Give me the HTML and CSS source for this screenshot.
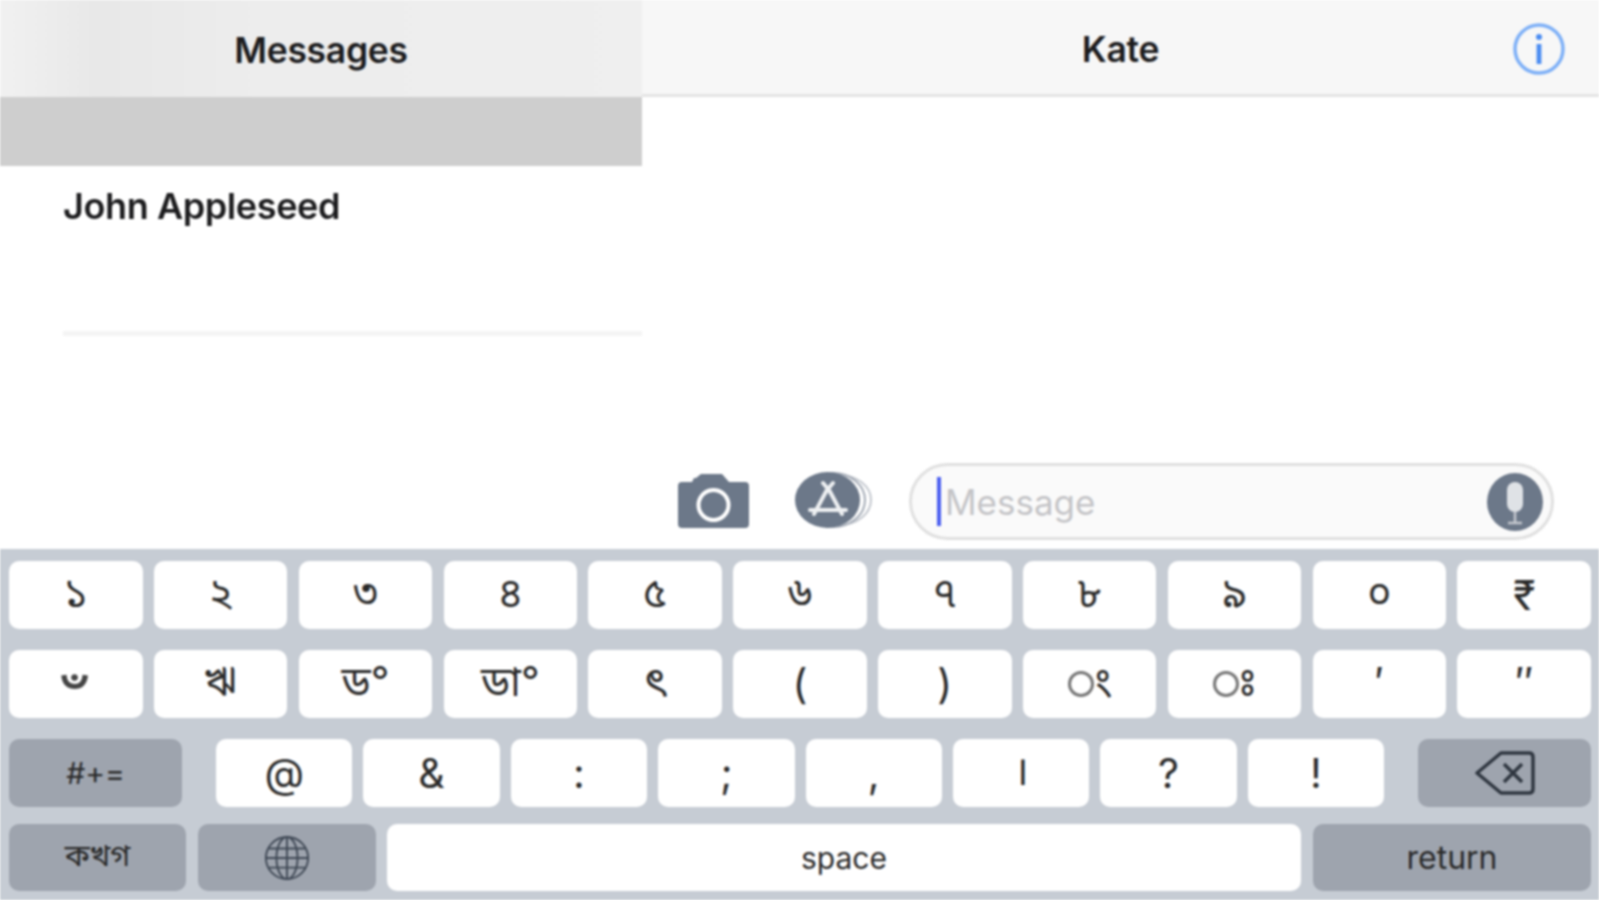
FILE: index.html
```html
<!DOCTYPE html>
<html lang="en">
<head>
  <meta charset="UTF-8">
  <title>Messages</title>
  <link rel="stylesheet" href="styles.css">
</head>
<body>
  <div class="screen">
    <div class="panes">
      <div class="sidebar">
        <div class="nav-bar nav-bar-left"><span class="nav-title">Messages</span></div>
        <div class="selected-row"></div>
        <div class="contact">
          <div class="contact-name">John Appleseed</div>
        </div>
      </div>
      <div class="conversation">
        <div class="nav-bar nav-bar-right">
          <span class="nav-title">Kate</span>
          <svg class="info-icon" viewBox="0 0 52 52">
            <circle cx="26" cy="26" r="24" fill="none" stroke="#7eb0f7" stroke-width="3.500"/>
            <circle cx="26" cy="14" r="3" fill="#4a8cf2"/>
            <rect x="23.600" y="21" width="4.800" height="20" fill="#4a8cf2"/>
          </svg>
        </div>
        <div class="thread"></div>
        <div class="composer">
          <svg class="camera-icon" viewBox="0 0 71 54">
            <path fill="#6c7889" fill-rule="evenodd" d="M4 8h10l2-4h2l5-4h21l7 8h16q4 0 4 4v38q0 4-4 4H4q-4 0-4-4V12q0-4 4-4zM35.500 14a17 17 0 1 0 .01 0zM35.500 18a13 13 0 1 1-.01 0z"/>
          </svg>
          <svg class="apps-icon" viewBox="0 0 78 58">
            <ellipse cx="44" cy="29" rx="32" ry="25" fill="none" stroke="#c4c8cf" stroke-width="2"/>
            <ellipse cx="38" cy="29" rx="32" ry="27" fill="#fff" stroke="#a4abb6" stroke-width="2"/>
            <ellipse cx="32.500" cy="29" rx="32.500" ry="28" fill="#6c7889"/>
            <path d="M33 17L19 43M33 17l14 26M15 39h36M28 12l5 6 5-6" fill="none" stroke="#eef0f2" stroke-width="4" stroke-linecap="round"/>
          </svg>
          <div class="message-field">
            <span class="caret"></span>
            <span class="placeholder">Message</span>
            <svg class="mic-icon" viewBox="0 0 56 58">
              <ellipse cx="28" cy="29" rx="28" ry="29" fill="#6c7889"/>
              <rect x="20" y="9" width="16" height="30" rx="8" fill="#dfe2e6"/>
              <path d="M28 39v11M21 50h14" stroke="#c4c8ce" stroke-width="2.500" fill="none"/>
            </svg>
          </div>
        </div>
      </div>
    </div>
    <div class="keyboard">
      <div class="key-row key-grid">
        <div class="key">১</div><div class="key">২</div><div class="key">৩</div><div class="key">৪</div><div class="key">৫</div><div class="key">৬</div><div class="key">৭</div><div class="key">৮</div><div class="key">৯</div><div class="key">০</div><div class="key">₹</div>
      </div>
      <div class="key-row key-grid">
        <div class="key"><span class="key-mark">&nbsp;ঁ</span></div><div class="key">ঋ</div><div class="key">ড°</div><div class="key">ডা°</div><div class="key">ৎ</div><div class="key">(</div><div class="key">)</div>
        <div class="key"><span class="ring"></span><span>◌ং</span></div><div class="key"><span class="ring"></span><span>◌ঃ</span></div>
        <div class="key key-raised">′</div><div class="key key-raised">″</div>
      </div>
      <div class="key-row key-split">
        <div class="key key-dark key-shift">#+=</div>
        <div class="key-middle">
          <div class="key">@</div><div class="key">&amp;</div><div class="key">:</div><div class="key">;</div><div class="key">,</div><div class="key">।</div><div class="key">?</div><div class="key">!</div>
        </div>
        <div class="key key-dark key-shift">
          <svg class="delete-icon" viewBox="0 0 60 44">
            <path d="M26 2h28q4 0 4 4v32q0 4-4 4H26L2 22z" fill="none" stroke="#2f3640" stroke-width="3.500" stroke-linejoin="round"/>
            <path d="M29 13l18 18M47 13L29 31" fill="none" stroke="#2f3640" stroke-width="3.500"/>
          </svg>
        </div>
      </div>
      <div class="key-row key-bottom">
        <div class="key key-dark key-lang">কখগ</div>
        <div class="key key-dark key-globe">
          <svg class="globe-icon" viewBox="0 0 48 48">
            <g fill="none" stroke="#3f4855" stroke-width="2">
              <circle cx="24" cy="24" r="22"/>
              <ellipse cx="24" cy="24" rx="11" ry="22"/>
              <path d="M24 2v44M2 24h44M5 14h38M5 34h38"/>
            </g>
          </svg>
        </div>
        <div class="key key-space">space</div>
        <div class="key key-dark key-return">return</div>
      </div>
    </div>
  </div>
</body>
</html>
```

FILE: styles.css
```css
* {
  margin: 0;
  padding: 0;
  box-sizing: border-box;
}
html, body {
  width: 100%;
  height: 100%;
  overflow: hidden;
  background: #fff;
  font-family: Inter, "Noto Sans", "Liberation Sans", sans-serif;
  color: #1c1c1e;
}
.screen {
  display: flex;
  flex-direction: column;
  width: 100%;
  height: 100%;
  filter: blur(1.1px);
}
.panes {
  display: flex;
  height: 549px;
}
.sidebar {
  width: 642px;
  display: flex;
  flex-direction: column;
}
.conversation {
  flex: 1;
  display: flex;
  flex-direction: column;
}
.nav-bar {
  height: 97px;
  padding-top: 4px;
  display: flex;
  align-items: center;
  justify-content: center;
  position: relative;
  flex-shrink: 0;
}
.nav-bar-left {
  background: linear-gradient(90deg, #f1f1f1, #e8e8e8 15%, #ededed 40%, #efefef);
}
.nav-bar-right {
  background: #f7f7f7;
  border-bottom: 3px solid #e4e4e4;
}
.nav-title {
  font-size: 35.500px;
  font-weight: 600;
  letter-spacing: -0.3px;
}
.info-icon {
  position: absolute;
  right: 34px;
  top: 23px;
  width: 52px;
  height: 52px;
}
.selected-row {
  height: 69px;
  background: #cecece;
}
.contact {
  margin-left: 63px;
  height: 170px;
  border-bottom: 5px solid #f4f4f4;
  padding-top: 18px;
}
.contact-name {
  font-size: 36px;
  font-weight: 600;
  letter-spacing: -0.4px;
}
.thread {
  flex: 1;
}
.composer {
  height: 89px;
  display: flex;
  align-items: flex-start;
  padding: 3px 45px 0 36px;
}
.camera-icon {
  width: 71px;
  height: 54px;
  margin-top: 11px;
}
.apps-icon {
  width: 78px;
  height: 58px;
  margin: 8px 0 0 46px;
}
.message-field {
  margin-left: 36px;
  flex: 1;
  height: 77px;
  border: 3px solid #e0e0e0;
  border-radius: 39px;
  background: #fafafa;
  display: flex;
  align-items: center;
  padding: 0 8px 0 25px;
}
.caret {
  width: 4px;
  height: 49px;
  background: #4a5ef0;
  margin-right: 4px;
}
.placeholder {
  flex: 1;
  font-size: 35px;
  color: #c4c4c7;
}
.mic-icon {
  width: 56px;
  height: 58px;
}
.keyboard {
  flex: 1;
  background: #c6ccd4;
  padding: 12px 8px 0 9px;
}
.key-row {
  height: 68px;
  margin-bottom: 21px;
}
.key-grid {
  display: grid;
  grid-template-columns: repeat(11, 1fr);
  column-gap: 11.350px;
}
.key-split {
  display: flex;
  justify-content: space-between;
  margin-bottom: 17px;
}
.key-middle {
  width: 1168px;
  display: flex;
  gap: 11px;
}
.key-middle .key {
  flex: 1;
}
.key-bottom {
  display: flex;
  height: 67px;
  margin-bottom: 0;
}
.key {
  background: #fff;
  border-radius: 10px;
  display: flex;
  align-items: center;
  justify-content: center;
  font-size: 41px;
  color: #2a2a2a;
  font-family: Inter, "Noto Sans Bengali", "Noto Sans", sans-serif;
}
.key-dark {
  background: #9ea4ae;
}
.key-mark {
  font-size: 76px;
  line-height: 68px;
  color: #444;
  transform: translate(-11px, 28px);
}
.key-raised {
  align-items: flex-start;
  padding-top: 7px;
}
.ring {
  width: 26px;
  height: 26px;
  border: 3px solid #777;
  border-radius: 50%;
  background: #fff;
  margin-right: -21px;
  position: relative;
  z-index: 1;
}
.key-shift {
  width: 173px;
  font-size: 30px;
}
.key-lang {
  width: 177px;
  font-size: 31px;
}
.key-globe {
  width: 178px;
  margin-left: 12px;
}
.key-space {
  width: 914px;
  margin-left: 11px;
  font-size: 30px;
}
.key-return {
  width: 278px;
  margin-left: 12px;
  font-size: 32px;
}
.delete-icon {
  width: 60px;
  height: 44px;
}
.globe-icon {
  width: 46px;
  height: 46px;
}
```
